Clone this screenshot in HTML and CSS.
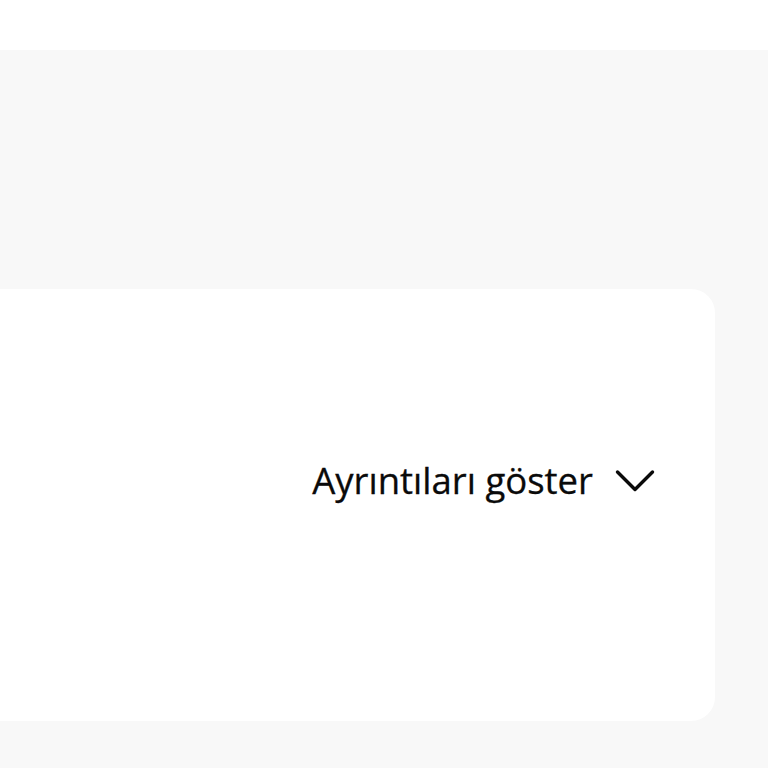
FILE: index.html
```html
<!DOCTYPE html>
<html lang="tr">
<head>
<meta charset="utf-8">
<link rel="stylesheet" href="styles.css">
</head>
<body>
<header class="topbar"></header>
<main class="page">
  <section class="card">
    <button class="toggle" type="button">
      <span class="toggle-label">Ayrıntıları göster</span>
      <svg class="chevron" width="40" height="24" viewBox="0 0 40 24" aria-hidden="true">
        <path d="M2.5 3 L20 20.5 L37.5 3" fill="none" stroke="#0a0a0a" stroke-width="3.4" stroke-linecap="round" stroke-linejoin="round"/>
      </svg>
    </button>
  </section>
</main>
</body>
</html>
```
FILE: styles.css
```css
html, body {
  margin: 0;
  padding: 0;
}
body {
  font-family: "Open Sans", "Liberation Sans", sans-serif;
  background: #f8f8f8;
  width: 768px;
  height: 768px;
  overflow: hidden;
}
.topbar {
  height: 50px;
  background: #ffffff;
}
.page {
  background: #f8f8f8;
  padding-top: 239px;
}
.card {
  margin-left: -30px;
  width: 745px;
  height: 432px;
  background: #ffffff;
  border-radius: 24px;
  box-sizing: border-box;
  display: flex;
  justify-content: flex-end;
  align-items: flex-start;
  padding: 171px 60px 0 0;
}
.toggle {
  display: flex;
  align-items: center;
  gap: 22px;
  background: none;
  border: 0;
  padding: 0;
  font-family: inherit;
  cursor: pointer;
}
.toggle-label {
  font-size: 36.5px;
  line-height: 40px;
  color: #0a0a0a;
  -webkit-text-stroke: 0.3px #0a0a0a;
}
.chevron {
  display: block;
  margin-top: 1px;
}
```
